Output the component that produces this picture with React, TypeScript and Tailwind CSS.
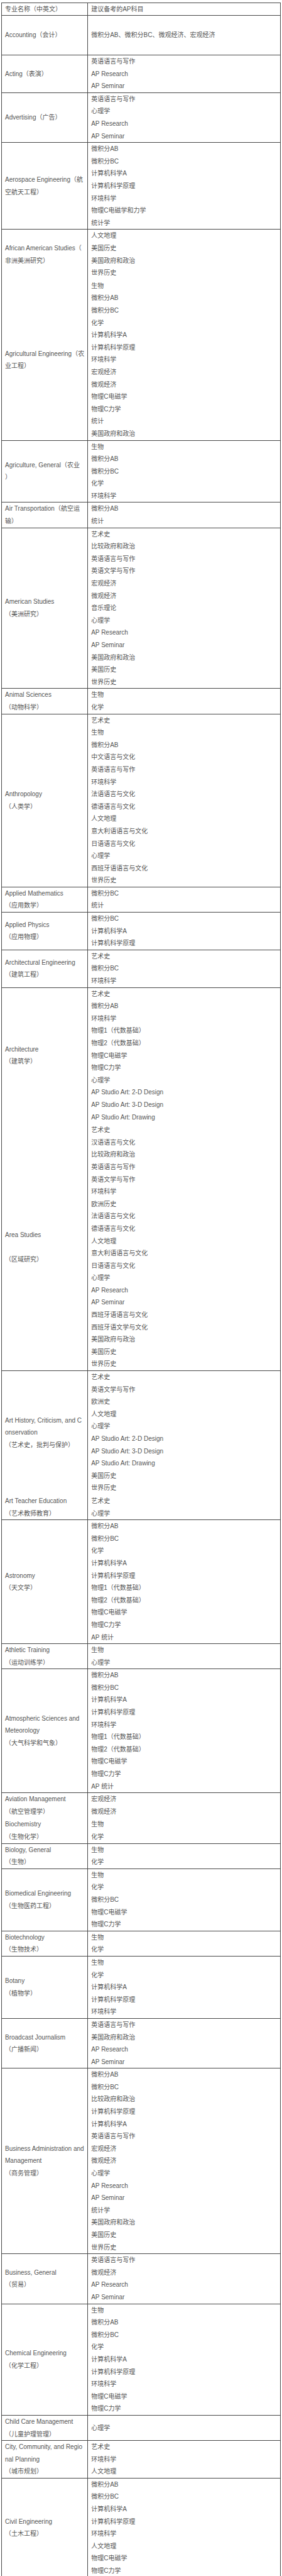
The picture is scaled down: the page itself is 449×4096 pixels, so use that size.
import React from "react";

type RowData = { l: string[]; r: string[]; nb?: boolean; tall?: boolean };

const rows: RowData[] = [
  { l: ["Accounting（会计）"], r: ["微积分AB、微积分BC、微观经济、宏观经济"], tall: true },
  { l: ["Acting（表演）"], r: ["英语语言与写作", "AP Research", "AP Seminar"] },
  { l: ["Advertising（广告）"], r: ["英语语言与写作", "心理学", "AP Research", "AP Seminar"] },
  {
    l: ["Aerospace Engineering（航", "空航天工程）"],
    r: ["微积分AB", "微积分BC", "计算机科学A", "计算机科学原理", "环境科学", "物理C电磁学和力学", "统计学"],
  },
  { l: ["African American Studies（", "非洲美洲研究）"], r: ["人文地理", "美国历史", "美国政府和政治", "世界历史"] },
  {
    nb: true,
    l: ["Agricultural Engineering（农", "业工程）"],
    r: ["生物", "微积分AB", "微积分BC", "化学", "计算机科学A", "计算机科学原理", "环境科学", "宏观经济", "微观经济", "物理C电磁学", "物理C力学", "统计", "美国政府和政治"],
  },
  { l: ["Agriculture, General（农业", "）"], r: ["生物", "微积分AB", "微积分BC", "化学", "环境科学"] },
  { l: ["Air Transportation（航空运", "输）"], r: ["微积分AB", "统计"] },
  {
    l: ["American Studies", "（美洲研究）"],
    r: ["艺术史", "比较政府和政治", "英语语言与写作", "英语文学与写作", "宏观经济", "微观经济", "音乐理论", "心理学", "AP Research", "AP Seminar", "美国政府和政治", "美国历史", "世界历史"],
  },
  { l: ["Animal Sciences", "（动物科学）"], r: ["生物", "化学"] },
  {
    l: ["Anthropology", "（人类学）"],
    r: ["艺术史", "生物", "微积分AB", "中文语言与文化", "英语语言与写作", "环境科学", "法语语言与文化", "德语语言与文化", "人文地理", "意大利语语言与文化", "日语语言与文化", "心理学", "西班牙语语言与文化", "世界历史"],
  },
  { l: ["Applied Mathematics", "（应用数学）"], r: ["微积分BC", "统计"] },
  { l: ["Applied Physics", "（应用物理）"], r: ["微积分BC", "计算机科学A", "计算机科学原理"] },
  { l: ["Architectural Engineering", "（建筑工程）"], r: ["艺术史", "微积分BC", "环境科学"] },
  {
    l: ["Architecture", "（建筑学）"],
    r: ["艺术史", "微积分AB", "环境科学", "物理1（代数基础）", "物理2（代数基础）", "物理C电磁学", "物理C力学", "心理学", "AP Studio Art: 2-D Design", "AP Studio Art: 3-D Design", "AP Studio Art: Drawing"],
  },
  {
    nb: true,
    l: ["Area Studies", "\u00a0", "（区域研究）"],
    r: ["艺术史", "汉语语言与文化", "比较政府和政治", "英语语言与写作", "英语文学与写作", "环境科学", "欧洲历史", "法语语言与文化", "德语语言与文化", "人文地理", "意大利语语言与文化", "日语语言与文化", "心理学", "AP Research", "AP Seminar", "西班牙语语言与文化", "西班牙语文学与文化", "美国政府与政治", "美国历史", "世界历史"],
  },
  {
    l: ["Art History, Criticism, and C", "onservation", "（艺术史，批判与保护）"],
    r: ["艺术史", "英语文学与写作", "欧洲史", "人文地理", "心理学", "AP Studio Art: 2-D Design", "AP Studio Art: 3-D Design", "AP Studio Art: Drawing", "美国历史", "世界历史"],
  },
  { nb: true, l: ["Art Teacher Education", "（艺术教师教育）"], r: ["艺术史", "心理学"] },
  {
    l: ["Astronomy", "（天文学）"],
    r: ["微积分AB", "微积分BC", "化学", "计算机科学A", "计算机科学原理", "物理1（代数基础）", "物理2（代数基础）", "物理C电磁学", "物理C力学", "AP 统计"],
  },
  { l: ["Athletic Training", "（运动训练学）"], r: ["生物", "心理学"] },
  {
    l: ["Atmospheric Sciences and", "Meteorology", "（大气科学和气象）"],
    r: ["微积分AB", "微积分BC", "计算机科学A", "计算机科学原理", "环境科学", "物理1（代数基础）", "物理2（代数基础）", "物理C电磁学", "物理C力学", "AP 统计"],
  },
  { l: ["Aviation Management", "（航空管理学）"], r: ["宏观经济", "微观经济"] },
  { nb: true, l: ["Biochemistry", "（生物化学）"], r: ["生物", "化学"] },
  { l: ["Biology, General", "（生物）"], r: ["生物", "化学"] },
  { l: ["Biomedical Engineering", "（生物医药工程）"], r: ["生物", "化学", "微积分BC", "物理C电磁学", "物理C力学"] },
  { l: ["Biotechnology", "（生物技术）"], r: ["生物", "化学"] },
  { l: ["Botany", "（植物学）"], r: ["生物", "化学", "计算机科学A", "计算机科学原理", "环境科学"] },
  { l: ["Broadcast Journalism", "（广播新闻）"], r: ["英语语言与写作", "美国政府和政治", "AP Research", "AP Seminar"] },
  {
    l: ["Business Administration and", "Management", "（商务管理）"],
    r: ["微积分AB", "微积分BC", "比较政府和政治", "计算机科学原理", "计算机科学A", "英语语言与写作", "宏观经济", "微观经济", "心理学", "AP Research", "AP Seminar", "统计学", "美国政府和政治", "美国历史", "世界历史"],
  },
  { l: ["Business, General", "（贸易）"], r: ["英语语言与写作", "微观经济", "AP Research", "AP Seminar"] },
  {
    l: ["Chemical Engineering", "（化学工程）"],
    r: ["生物", "微积分AB", "微积分BC", "化学", "计算机科学A", "计算机科学原理", "环境科学", "物理C电磁学", "物理C力学"],
  },
  { l: ["Child Care Management", "（儿童护理管理）"], r: ["心理学"] },
  { l: ["City, Community, and Regio", "nal Planning", "（城市规划）"], r: ["艺术史", "环境科学", "人文地理"] },
  {
    l: ["Civil Engineering", "（土木工程）"],
    r: ["微积分AB", "微积分BC", "计算机科学A", "计算机科学原理", "环境科学", "人文地理", "物理C电磁学", "物理C力学"],
  },
];

const LINE = "h-[19.6px] leading-[19.6px] whitespace-nowrap";

function Row({ d }: { d: RowData }) {
  const top = d.nb ? "pt-px" : "border-t border-[#474747]";
  const hgt = d.tall ? "h-[63px]" : "";
  return (
    <div className="grid grid-cols-[136.7px_1fr]">
      <div className={`${top} ${hgt} border-r border-r-[#474747] pl-[5px] flex flex-col justify-center`}>
        {d.l.map((t, i) => (
          <div key={i} className={LINE}>
            {t}
          </div>
        ))}
      </div>
      <div className={`${top} ${hgt} pl-[5.5px] flex flex-col justify-center`}>
        {d.r.map((t, i) => (
          <div key={i} className={LINE}>
            {t}
          </div>
        ))}
      </div>
    </div>
  );
}

export default function App() {
  return (
    <div className="bg-white min-h-screen pt-[3.5px] px-[2px] text-[#555555] text-[10px] font-['Liberation_Sans','Noto_Sans_CJK_SC',sans-serif]">
      <div className="border-l border-r border-b border-[#474747]">
        <div className="grid grid-cols-[136.7px_1fr] border-t border-[#474747]">
          <div className="border-r border-[#474747] pl-[5px]">
            <div className={LINE}>专业名称（中英文）</div>
          </div>
          <div className="pl-[5.5px]">
            <div className={LINE}>建议备考的AP科目</div>
          </div>
        </div>
        {rows.map((d, i) => (
          <Row key={i} d={d} />
        ))}
      </div>
    </div>
  );
}
